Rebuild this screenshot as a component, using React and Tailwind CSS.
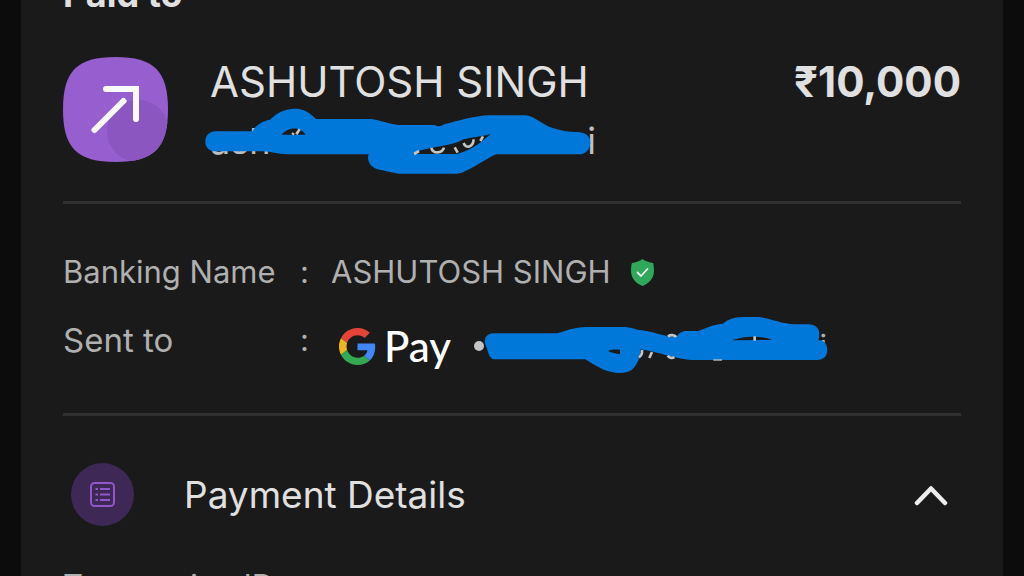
import React from "react";

function SentIcon() {
  return (
    <svg className="h-[105px] w-[105px] shrink-0" viewBox="0 0 105 105" fill="none" aria-hidden="true">
      <defs>
        <clipPath id="tile">
          <path d="M52.5 0C91 0 105 14 105 52.5S91 105 52.5 105 0 91 0 52.5 14 0 52.5 0Z" />
        </clipPath>
      </defs>
      <g clipPath="url(#tile)">
        <rect width="105" height="105" fill="#965ecf" />
        <circle cx="75" cy="74" r="31" fill="#8b56bf" />
      </g>
      <path d="M43 32H73V62" stroke="#fafafa" strokeWidth="6" strokeLinecap="round" />
      <path d="M31.500 73L60.500 44" stroke="#fafafa" strokeWidth="6" strokeLinecap="round" />
    </svg>
  );
}

function HandleScribble() {
  return (
    <svg className="absolute -left-[6px] -top-[16px] h-[70px] w-[392px]" viewBox="42 168 1176 210" fill="none" aria-hidden="true">
      <path
        fill="#0078d9"
        fillRule="evenodd"
        d="M75 244H188C196 226 215 214 240 209C262 186 290 175 318 176C345 177 362 190 378 207H545C570 211 595 221 625 225H735C745 232 755 228 765 222C800 215 850 197 900 196H1005C1035 197 1055 225 1090 235C1110 240 1130 247 1160 246C1185 246 1201 258 1201 278C1200 300 1185 313 1165 313H918C890 325 850 355 815 368C805 372 795 371 785 371H625C600 366 575 361 560 357C540 348 534 335 534 320L536 313H290C262 312 245 305 215 304H75C57 303 46 291 46 275C46 257 58 245 75 244ZM275 254C290 236 325 224 347 254ZM668 312C700 290 780 292 820 268C845 262 870 260 902 252C880 270 850 300 800 312Z"
      />
      <g stroke="#c4c4c4" strokeWidth="8">
        <path d="M319 253L329 238M307 254L311 249M672 312L687 303" />
        <path d="M724 293C728 312 756 312 762 293M794 292L803 308M821 279C827 298 849 292 851 268M871 273L879 259" />
      </g>
    </svg>
  );
}

function AccountScribble() {
  return (
    <svg className="absolute left-0 top-0 h-[60px] w-[348px]" viewBox="66 48 1044 180" fill="none" aria-hidden="true">
      <path
        fill="#0078d9"
        fillRule="evenodd"
        d="M98 100H292C320 92 340 82 380 81H490C512 81 522 88 545 91C580 95 610 110 650 112C655 100 664 93 680 93H715C740 84 755 75 788 71C805 58 820 52 850 51H895C930 53 960 71 1005 73H1045C1066 73 1077 86 1078 100L1076 121C1092 120 1102 133 1102 151C1101 170 1090 180 1072 180H695C655 178 620 165 575 154L542 148C541 170 533 195 515 210C500 220 475 221 455 216C420 210 400 190 374 178H105C92 178 86 165 83 152L75 130C72 113 82 101 98 100ZM444 153C455 147 470 148 480 149V162C467 162 455 158 444 153ZM817 121C845 108 905 105 936 120Z"
      />
      <g stroke="#c4c4c4" strokeWidth="8">
        <path d="M546 150C547 160 545 167 537 172M576 156L568 174M624 109C631 104 643 104 649 111M623 167C628 175 638 175 643 171M884 109V122" />
        <path d="M760 180H786" strokeWidth="4" />
      </g>
    </svg>
  );
}

function GoogleMark() {
  return (
    <svg className="h-[37px] w-[37px] shrink-0" viewBox="0 0 48 48" aria-hidden="true">
      <path fill="#e24538" d="M24 9.500c3.540 0 6.710 1.220 9.210 3.600l6.850-6.850C35.900 2.380 30.470 0 24 0 14.620 0 6.510 5.380 2.560 13.220l7.980 6.190C12.430 13.720 17.740 9.500 24 9.500z" />
      <path fill="#4285f4" d="M46.980 24.550c0-1.570-.15-3.090-.38-4.550H24v9.020h12.940c-.58 2.960-2.260 5.480-4.780 7.180l7.730 6c4.510-4.180 7.090-10.360 7.090-17.650z" />
      <path fill="#edb81c" d="M10.530 28.590c-.48-1.450-.76-2.990-.76-4.590s.27-3.140.76-4.590l-7.980-6.190C.92 16.460 0 20.120 0 24c0 3.880.92 7.540 2.560 10.780l7.970-6.190z" />
      <path fill="#34a853" d="M24 48c6.480 0 11.930-2.130 15.890-5.810l-7.730-6c-2.150 1.450-4.920 2.300-8.160 2.300-6.260 0-11.570-4.220-13.470-9.910l-7.980 6.190C6.510 42.620 14.620 48 24 48z" />
    </svg>
  );
}

function VerifiedShield() {
  return (
    <svg className="h-[27px] w-[23px] shrink-0" viewBox="0 0 23 27" fill="none" aria-label="Verified" role="img">
      <path fill="#2fa85c" d="M11.500 0C14 2 18.500 3.500 22 4C22.500 5 23 8 23 12C23 19.500 17.500 25 11.500 27C5.500 25 0 19.500 0 12C0 8 .5 5 1 4C4.500 3.500 9 2 11.500 0Z" />
      <path d="M6.500 13.500L10 17L16.500 10" stroke="#f4f4f4" strokeWidth="1.800" strokeLinecap="round" strokeLinejoin="round" />
    </svg>
  );
}

function ListIcon() {
  return (
    <svg className="h-[25px] w-[25px]" viewBox="0 0 25 25" fill="none" stroke="#9257c9" aria-hidden="true">
      <rect x="1" y="1" width="23" height="23" rx="3.500" strokeWidth="2" />
      <path d="M5.500 7H8M5.500 12.500H8M5.500 18H8M10 7H20M10 12.500H20M10 18H20" strokeWidth="1.800" />
    </svg>
  );
}

export default function App() {
  return (
    <div className="h-screen overflow-hidden bg-[#0c0c0c] px-[21px] font-['Inter',sans-serif]">
      <main className="min-h-full bg-[#1a1a1a] px-[42px]">
        <h1 className="-mt-[26px] h-[83px] text-[36px] font-bold leading-[40px] text-[#e0e0e0]">Paid to</h1>

        <section className="flex items-start">
          <SentIcon />
          <div className="ml-[42px] flex-1">
            <p className="text-[42px] leading-[50px] text-[#e0e0e0]">ASHUTOSH SINGH</p>
            <div className="relative mt-[15px] flex w-[386px] justify-between text-[36px] leading-[38px] text-[#c0c0c0]">
              <span>ash</span>
              <span>i</span>
              <HandleScribble />
            </div>
          </div>
          <p className="text-[42px] font-bold leading-[50px] text-[#e0e0e0]">₹10,000</p>
        </section>

        <hr className="mt-[39px] border-t-[3px] border-[#303030]" />

        <dl className="mt-12 grid grid-cols-[237px_31px_1fr] items-start gap-y-7 text-[31px] leading-[40px] text-[#b0b0b0]">
          <dt>Banking Name</dt>
          <dd aria-hidden="true">:</dd>
          <dd className="flex items-center gap-5">
            ASHUTOSH SINGH
            <VerifiedShield />
          </dd>
          <dt className="text-[33px] leading-[40px]">Sent to</dt>
          <dd aria-hidden="true">:</dd>
          <dd className="flex h-[52px] items-center pl-2">
            <GoogleMark />
            <span className="ml-2 font-['Lato',sans-serif] text-[42px] font-medium leading-[52px] text-white">Pay</span>
            <span className="ml-[23px] h-[10px] w-[10px] rounded-full bg-[#c4c4c4]" />
            <span className="relative -ml-0.5 flex h-[60px] w-[348px] items-center justify-end pr-[3px] leading-[60px]">
              i
              <AccountScribble />
            </span>
          </dd>
        </dl>

        <hr className="mt-[41px] border-t-[3px] border-[#303030]" />

        <button type="button" aria-expanded="true" className="mt-[47px] flex w-full items-center pl-2 pr-[13px] text-left">
          <span className="flex h-[63px] w-[63px] items-center justify-center rounded-full bg-[#3d2856]">
            <ListIcon />
          </span>
          <span className="ml-[50px] flex-1 text-[37px] leading-[46px] text-[#e0e0e0]">Payment Details</span>
          <svg className="h-[22px] w-[34px]" viewBox="0 0 34 22" fill="none" aria-hidden="true">
            <path d="M3 19L17 4.500L31 19" stroke="#ededed" strokeWidth="4.500" strokeLinecap="round" strokeLinejoin="round" />
          </svg>
        </button>

        <p className="mt-10 text-[31px] leading-[40px] text-[#b0b0b0]">Transaction ID</p>
      </main>
    </div>
  );
}
